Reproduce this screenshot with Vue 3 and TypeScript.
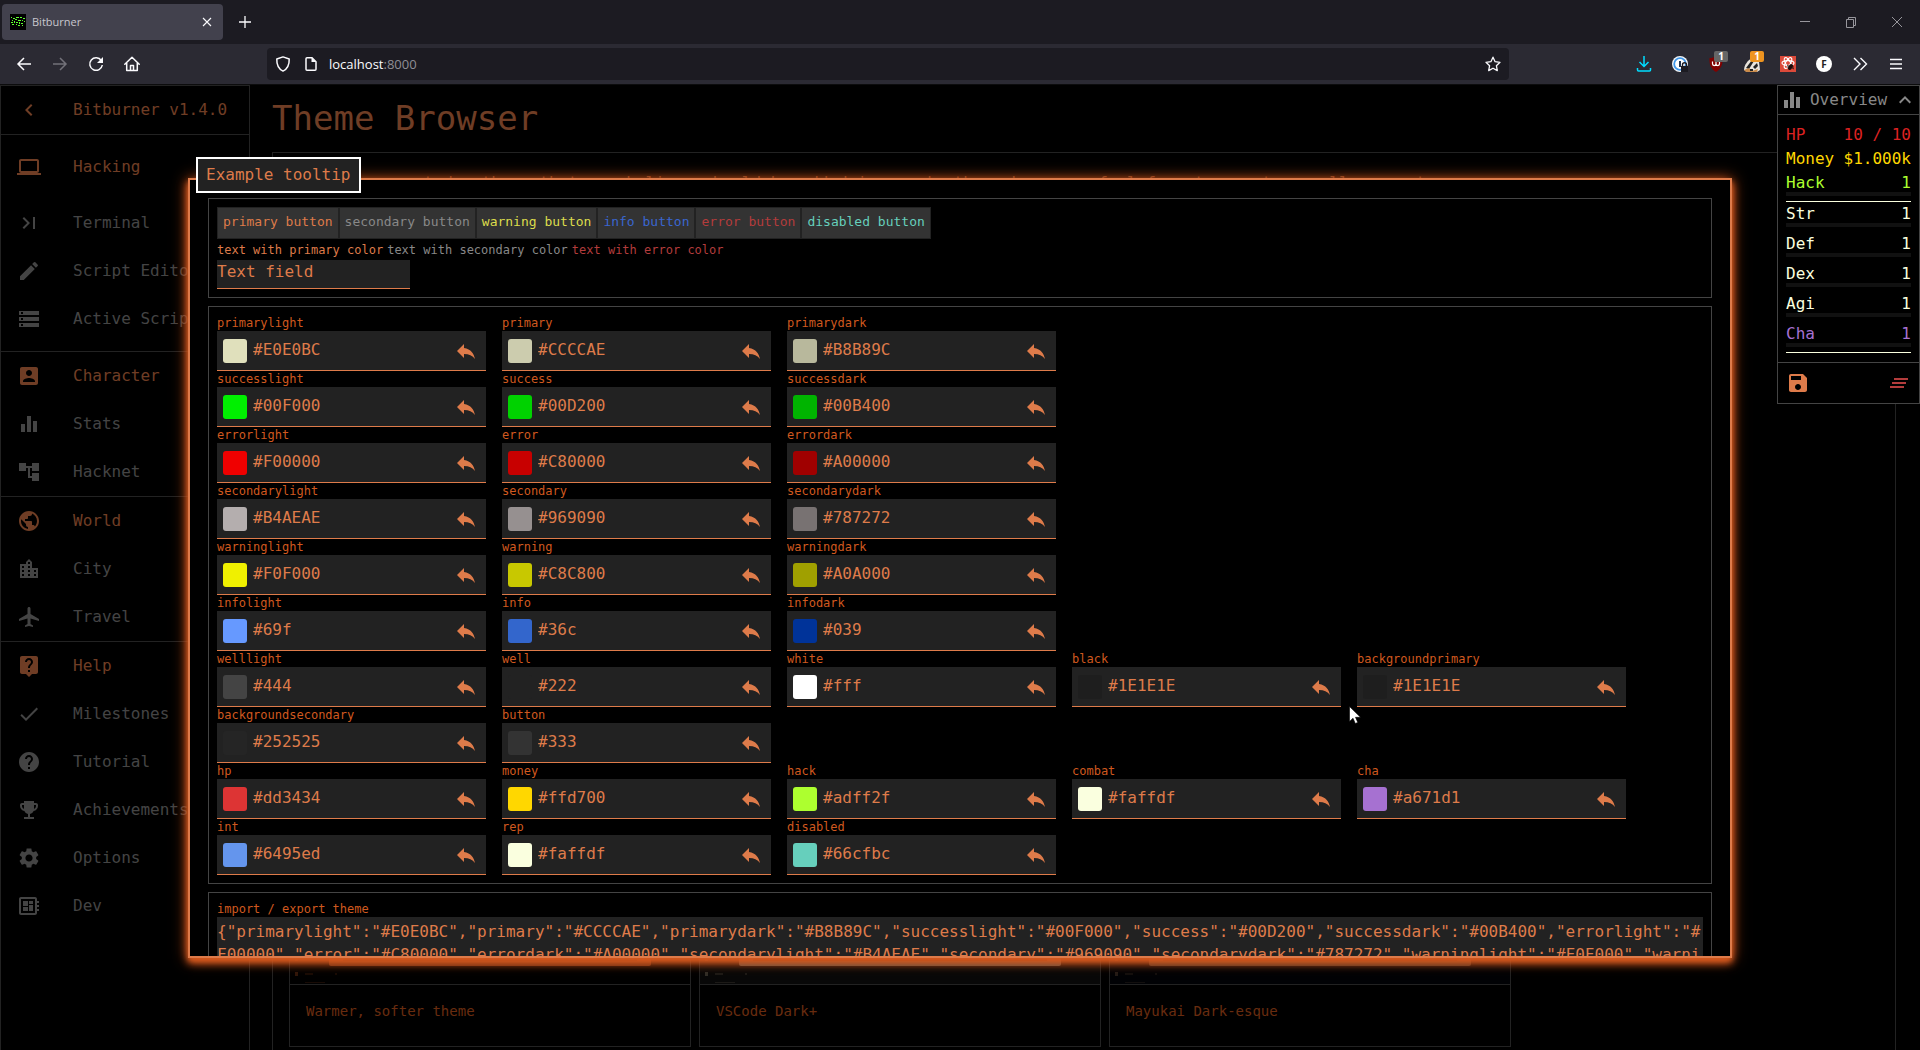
<script setup lang="ts">
import { computed, reactive, ref } from 'vue'

interface NavItem { label: string; icon: string; heading?: boolean }
interface Stat { label: string; value: string; kind: string; bar: boolean; rule: boolean }

const icons: Record<string, string> = {
  computer: 'M20 18c1.1 0 1.99-.9 1.99-2L22 6c0-1.1-.9-2-2-2H4c-1.1 0-2 .9-2 2v10c0 1.1.9 2 2 2H0v2h24v-2h-4zM4 6h16v10H4V6z',
  lastPage: 'M5.59 7.41 10.18 12l-4.59 4.59L7 18l6-6-6-6zM16 6h2v12h-2z',
  create: 'M3 17.25V21h3.75L17.81 9.94l-3.75-3.75L3 17.25zM20.71 7.04c.39-.39.39-1.02 0-1.41l-2.34-2.34a.9959.9959 0 0 0-1.41 0l-1.83 1.83 3.75 3.75 1.83-1.83z',
  storage: 'M2 20h20v-4H2v4zm2-3h2v2H4v-2zM2 4v4h20V4H2zm4 3H4V5h2v2zm-4 7h20v-4H2v4zm2-3h2v2H4v-2z',
  account: 'M3 5v14c0 1.1.89 2 2 2h14c1.1 0 2-.9 2-2V5c0-1.1-.9-2-2-2H5c-1.11 0-2 .9-2 2zm12 4c0 1.66-1.34 3-3 3s-3-1.34-3-3 1.34-3 3-3 3 1.34 3 3zm-9 8c0-2 4-3.1 6-3.1s6 1.1 6 3.1v1H6v-1z',
  equalizer: 'M10 20h4V4h-4v16zm-6 0h4v-8H4v8zM16 9v11h4V9h-4z',
  tree: 'M22 11V3h-7v3H9V3H2v8h7V8h2v10h4v3h7v-8h-7v3h-2V8h2v3z',
  globe: 'M12 2C6.48 2 2 6.48 2 12s4.48 10 10 10 10-4.48 10-10S17.52 2 12 2zm-1 17.93c-3.95-.49-7-3.85-7-7.93 0-.62.08-1.21.21-1.79L9 15v1c0 1.1.9 2 2 2v1.93zm6.9-2.54c-.26-.81-1-1.39-1.9-1.39h-1v-3c0-.55-.45-1-1-1H8v-2h2c.55 0 1-.45 1-1V7h2c1.1 0 2-.9 2-2v-.41c2.93 1.19 5 4.06 5 7.41 0 2.08-.8 3.97-2.1 5.39z',
  city: 'M15 11V5l-3-3-3 3v2H3v14h18V11h-6zm-8 8H5v-2h2v2zm0-4H5v-2h2v2zm0-4H5V9h2v2zm6 8h-2v-2h2v2zm0-4h-2v-2h2v2zm0-4h-2V9h2v2zm0-4h-2V5h2v2zm6 12h-2v-2h2v2zm0-4h-2v-2h2v2z',
  plane: 'M22 16v-2l-8.5-5V3.5c0-.83-.67-1.5-1.5-1.5s-1.5.67-1.5 1.5V9L2 14v2l8.5-2.5V19L8 20.5V22l4-1 4 1v-1.5L13.5 19v-5.5L22 16z',
  liveHelp: 'M19 2H5c-1.11 0-2 .9-2 2v14c0 1.1.89 2 2 2h4l3 3 3-3h4c1.1 0 2-.9 2-2V4c0-1.1-.9-2-2-2zm-6 16h-2v-2h2v2zm2.07-7.75-.9.92C13.45 11.9 13 12.5 13 14h-2v-.5c0-1.1.45-2.1 1.17-2.83l1.24-1.26c.37-.36.59-.86.59-1.41 0-1.1-.9-2-2-2s-2 .9-2 2H8c0-2.21 1.79-4 4-4s4 1.79 4 4c0 .88-.36 1.68-.93 2.25z',
  check: 'M9 16.17 4.83 12l-1.42 1.41L9 19 21 7l-1.41-1.41z',
  help: 'M12 2C6.48 2 2 6.48 2 12s4.48 10 10 10 10-4.48 10-10S17.52 2 12 2zm1 17h-2v-2h2v2zm2.07-7.75-.9.92C13.45 12.9 13 13.5 13 15h-2v-.5c0-1.1.45-2.1 1.17-2.83l1.24-1.26c.37-.36.59-.86.59-1.41 0-1.1-.9-2-2-2s-2 .9-2 2H8c0-2.21 1.79-4 4-4s4 1.79 4 4c0 .88-.36 1.68-.93 2.25z',
  trophy: 'M19 5h-2V3H7v2H5c-1.1 0-2 .9-2 2v1c0 2.55 1.92 4.63 4.39 4.94.63 1.5 1.98 2.63 3.61 2.96V19H7v2h10v-2h-4v-3.1c1.63-.33 2.98-1.46 3.61-2.96C19.08 12.63 21 10.55 21 8V7c0-1.1-.9-2-2-2zM5 8V7h2v3.82C5.84 10.4 5 9.3 5 8zm14 0c0 1.3-.84 2.4-2 2.82V7h2v1z',
  settings: 'M19.14 12.94c.04-.3.06-.61.06-.94 0-.32-.02-.64-.07-.94l2.03-1.58c.18-.14.23-.41.12-.61l-1.92-3.32c-.12-.22-.37-.29-.59-.22l-2.39.96c-.5-.38-1.03-.7-1.62-.94l-.36-2.54c-.04-.24-.24-.41-.48-.41h-3.84c-.24 0-.43.17-.47.41l-.36 2.54c-.59.24-1.13.57-1.62.94l-2.39-.96c-.22-.08-.47 0-.59.22L2.74 8.87c-.12.21-.08.47.12.61l2.03 1.58c-.05.3-.09.63-.09.94s.02.64.07.94l-2.03 1.58c-.18.14-.23.41-.12.61l1.92 3.32c.12.22.37.29.59.22l2.39-.96c.5.38 1.03.7 1.62.94l.36 2.54c.05.24.24.41.48.41h3.84c.24 0 .44-.17.47-.41l.36-2.54c.59-.24 1.13-.56 1.62-.94l2.39.96c.22.08.47 0 .59-.22l1.92-3.32c.12-.22.07-.47-.12-.61l-2.01-1.58zM12 15.6c-1.98 0-3.6-1.62-3.6-3.6s1.62-3.6 3.6-3.6 3.6 1.62 3.6 3.6-1.62 3.6-3.6 3.6z',
  board: 'M22 9V7h-2V5c0-1.1-.9-2-2-2H4c-1.1 0-2 .9-2 2v14c0 1.1.9 2 2 2h14c1.1 0 2-.9 2-2v-2h2v-2h-2v-2h2v-2h-2V9h2zm-4 10H4V5h14v14zM6 13h5v4H6zm6-6h4v3h-4zM6 7h5v5H6zm6 4h4v6h-4z',
  chevronLeft: 'M15.41 7.41 14 6l-6 6 6 6 1.41-1.41L10.83 12z',
  chevronUp: 'm12 8-6 6 1.41 1.41L12 10.83l4.59 4.58L18 14z',
  reply: 'M10 9V5l-7 7 7 7v-4.1c5 0 8.5 1.6 11 5.1-1-5-4-10-11-11z',
  save: 'M17 3H5c-1.11 0-2 .9-2 2v14c0 1.1.89 2 2 2h14c1.1 0 2-.9 2-2V7l-4-4zm-5 16c-1.66 0-3-1.34-3-3s1.34-3 3-3 3 1.34 3 3-1.34 3-3 3zm3-10H5V5h10v4z',
  clearAll: 'M5 13h14v-2H5v2zm-2 4h14v-2H3v2zM7 7v2h14V7H7z',
}

const navGroups: NavItem[][] = [
  [
    { label: 'Hacking', icon: 'computer', heading: true },
    { label: 'Terminal', icon: 'lastPage' },
    { label: 'Script Editor', icon: 'create' },
    { label: 'Active Scripts', icon: 'storage' },
  ],
  [
    { label: 'Character', icon: 'account', heading: true },
    { label: 'Stats', icon: 'equalizer' },
    { label: 'Hacknet', icon: 'tree' },
  ],
  [
    { label: 'World', icon: 'globe', heading: true },
    { label: 'City', icon: 'city' },
    { label: 'Travel', icon: 'plane' },
  ],
  [
    { label: 'Help', icon: 'liveHelp', heading: true },
    { label: 'Milestones', icon: 'check' },
    { label: 'Tutorial', icon: 'help' },
    { label: 'Achievements', icon: 'trophy' },
    { label: 'Options', icon: 'settings' },
    { label: 'Dev', icon: 'board' },
  ],
]

const rows: string[][] = [
  ['primarylight', 'primary', 'primarydark'],
  ['successlight', 'success', 'successdark'],
  ['errorlight', 'error', 'errordark'],
  ['secondarylight', 'secondary', 'secondarydark'],
  ['warninglight', 'warning', 'warningdark'],
  ['infolight', 'info', 'infodark'],
  ['welllight', 'well', 'white', 'black', 'backgroundprimary'],
  ['backgroundsecondary', 'button'],
  ['hp', 'money', 'hack', 'combat', 'cha'],
  ['int', 'rep', 'disabled'],
]

const defaults: Record<string, string> = {
  primarylight: '#E0E0BC', primary: '#CCCCAE', primarydark: '#B8B89C',
  successlight: '#00F000', success: '#00D200', successdark: '#00B400',
  errorlight: '#F00000', error: '#C80000', errordark: '#A00000',
  secondarylight: '#B4AEAE', secondary: '#969090', secondarydark: '#787272',
  warninglight: '#F0F000', warning: '#C8C800', warningdark: '#A0A000',
  infolight: '#69f', info: '#36c', infodark: '#039',
  welllight: '#444', well: '#222', white: '#fff', black: '#1E1E1E', backgroundprimary: '#1E1E1E',
  backgroundsecondary: '#252525', button: '#333',
  hp: '#dd3434', money: '#ffd700', hack: '#adff2f', combat: '#faffdf', cha: '#a671d1',
  int: '#6495ed', rep: '#faffdf', disabled: '#66cfbc',
}

const theme = reactive<Record<string, string>>({ ...defaults })
const exported = computed(() => JSON.stringify(theme))
const sample = ref('Text field')
const reset = (key: string) => { theme[key] = defaults[key] }

const buttonKinds = ['primary', 'secondary', 'warning', 'info', 'error', 'disabled']
const textKinds = ['primary', 'secondary', 'error']

const stats: Stat[] = [
  { label: 'HP', value: '10 / 10', kind: 'hp', bar: false, rule: false },
  { label: 'Money', value: '$1.000k', kind: 'money', bar: false, rule: false },
  { label: 'Hack', value: '1', kind: 'hack', bar: true, rule: true },
  { label: 'Str', value: '1', kind: 'combat', bar: true, rule: false },
  { label: 'Def', value: '1', kind: 'combat', bar: true, rule: false },
  { label: 'Dex', value: '1', kind: 'combat', bar: true, rule: false },
  { label: 'Agi', value: '1', kind: 'combat', bar: true, rule: false },
  { label: 'Cha', value: '1', kind: 'cha', bar: true, rule: true },
]

const cards = [
  { title: 'Warmer, softer theme', tint: '#c05a2a', base: '#000000' },
  { title: 'VSCode Dark+', tint: '#b0a48c', base: '#101010' },
  { title: 'Mayukai Dark-esque', tint: '#8a6a52', base: '#02040a' },
]
</script>

<template>
  <div class="window">
    <header class="tabs">
      <div class="tab">
        <svg class="favicon" width="16" height="16" viewBox="0 0 16 16" aria-hidden="true">
          <path d="M0 0h16v16H0z" fill="#000" />
          <path d="M1 3h1v1H1zM3 4h2v1H3zM6 3h3v1H6zM10 3h2v1h-2zM13 4h2v1h-2zM2 6h1v1H2zM5 5h2v1H5zM8 6h3v1H8zM12 6h1v1h-1zM14 7h1v1h-1zM1 8h2v1H1zM4 7h1v2H4zM6 8h2v1H6zM9 8h1v2H9zM11 9h2v1h-2zM2 10h2v1H2zM6 10h1v1H6zM8 11h2v1H8zM12 11h1v1h-1z" fill="#5dff2e" />
        </svg>
        <span class="tab-title">Bitburner</span>
        <button class="bare" aria-label="Close tab">
          <svg width="16" height="16" viewBox="0 0 16 16"><path d="m4 4 8 8m0-8-8 8" fill="none" stroke="#fbfbfe" stroke-width="1.1" /></svg>
        </button>
      </div>
      <button class="bare new-tab" aria-label="New tab">
        <svg width="16" height="16" viewBox="0 0 16 16"><path d="M8 2v12M2 8h12" fill="none" stroke="#fbfbfe" stroke-width="1.3" /></svg>
      </button>
      <div class="window-controls">
        <button class="bare" aria-label="Minimize"><svg width="12" height="12" viewBox="0 0 12 12"><path d="M1 5.500h10" stroke="#97969c" fill="none" /></svg></button>
        <button class="bare" aria-label="Restore"><svg width="12" height="12" viewBox="0 0 12 12"><path d="M1.500 3.500h7v8h-7zM3.500 3.500v-2h7v8h-2" stroke="#97969c" fill="none" /></svg></button>
        <button class="bare" aria-label="Close"><svg width="12" height="12" viewBox="0 0 12 12"><path d="m1 1 10 10M11 1 1 11" stroke="#97969c" fill="none" /></svg></button>
      </div>
    </header>

    <div class="toolbar">
      <nav class="nav-buttons" aria-label="Browser">
        <button class="bare" aria-label="Back"><svg width="16" height="16" viewBox="0 0 16 16"><path d="M15 8H2m6-6L2 8l6 6" fill="none" stroke="#fbfbfe" stroke-width="1.5" /></svg></button>
        <button class="bare" aria-label="Forward"><svg width="16" height="16" viewBox="0 0 16 16"><path d="M1 8h13M8 2l6 6-6 6" fill="none" stroke="#73727a" stroke-width="1.5" /></svg></button>
        <button class="bare" aria-label="Reload"><svg width="16" height="16" viewBox="0 0 16 16"><path d="M13.300 4.500A6.300 6.300 0 1 0 14.300 9" fill="none" stroke="#fbfbfe" stroke-width="1.500" /><path d="M15 1v6H9z" fill="#fbfbfe" /></svg></button>
        <button class="bare" aria-label="Home"><svg width="16" height="16" viewBox="0 0 16 16"><path d="M.8 8.200 8 1.200l7.200 7M2.700 7v7.500h10.600V7M6.500 14v-4.500h3V14" fill="none" stroke="#fbfbfe" stroke-width="1.500" stroke-linejoin="round" stroke-linecap="round" /></svg></button>
      </nav>
      <div class="address">
        <svg width="16" height="16" viewBox="0 0 16 16" aria-hidden="true"><path d="M8 .9 14.200 3c.2 5.500-1.400 9.800-6.200 12.100C3.200 12.800 1.600 8.500 1.800 3z" fill="none" stroke="#fbfbfe" stroke-width="1.500" stroke-linejoin="round" /></svg>
        <svg width="16" height="16" viewBox="0 0 16 16" aria-hidden="true"><path d="M4 1.700h5l4 4v7.600a1 1 0 0 1-1 1H4a1 1 0 0 1-1-1V2.700a1 1 0 0 1 1-1z" fill="none" stroke="#fbfbfe" stroke-width="1.500" /><path d="M8.500 1.500V6H13z" fill="#fbfbfe" /></svg>
        <span class="url">localhost<span class="port">:8000</span></span>
        <svg width="16" height="16" viewBox="0 0 16 16" aria-hidden="true"><path d="m8 1.200 2.100 4.500 4.900.6-3.600 3.400.9 4.900L8 12.200l-4.300 2.400.9-4.900L1 6.300l4.900-.6z" fill="none" stroke="#fbfbfe" stroke-width="1.300" stroke-linejoin="round" /></svg>
      </div>
      <div class="extensions">
        <button class="bare" aria-label="Downloads"><svg width="16" height="16" viewBox="0 0 16 16"><path d="M8 0v10M3.500 6 8 10.500 12.500 6M1.500 12v2a1 1 0 0 0 1 1h11a1 1 0 0 0 1-1v-2" fill="none" stroke="#00ddff" stroke-width="1.500" /></svg></button>
        <button class="bare" aria-label="Password manager"><svg width="16" height="16" viewBox="0 0 16 16"><circle cx="8" cy="8" r="8" fill="#f2f5f8" /><circle cx="8" cy="8" r="5.800" fill="#fff" stroke="#3f97ea" stroke-width="1.800" /><path d="M7 5h2v6H7z" fill="#1d3350" /><path d="M9 10h7v6H9z" fill="#1c1b22" /><path d="M10.500 10V8.700a2 2 0 0 1 4 0V10" fill="none" stroke="#1c1b22" stroke-width="1.400" /></svg></button>
        <button class="bare badged" aria-label="Content blocker"><svg width="16" height="16" viewBox="0 0 16 16"><path d="M8 0c2 1.500 4 2 6.500 2 .3 6-1 10.500-6.500 14C2.500 12.500 1.200 8 1.500 2 4 2 6 1.500 8 0z" fill="#800000" /><path d="M4.500 5.500v2.300a1.700 1.700 0 0 0 3.500 0V5.500m0 2.300a1.700 1.700 0 0 0 3.500 0V5.500" fill="none" stroke="#fff" stroke-width="1.200" /></svg><span class="badge grey">1</span></button>
        <button class="bare badged" aria-label="Tracker blocker"><svg width="16" height="16" viewBox="0 0 16 16"><path d="M0 14C0 9 4 4 8 2l7 4 1 8-3 2H3z" fill="#e9e4dc" /><path d="m2 12 6-8 2 1-5 8zM9 11l4-4 1 3-3 3z" fill="#222" /><path d="m0 14 5-2 3 3 6-2-1 3H2z" fill="#c98a4a" /><path d="M6 13h3v2H6z" fill="#222" /></svg><span class="badge orange">1</span></button>
        <button class="bare" aria-label="Component inspector"><svg width="16" height="16" viewBox="0 0 16 16"><path d="M0 0h16v16H0z" fill="#dc4a3a" /><g fill="none" stroke="#fff" stroke-width="1.200"><ellipse cx="8" cy="7" rx="6" ry="2.400" /><ellipse cx="8" cy="7" rx="6" ry="2.400" transform="rotate(60 8 7)" /><ellipse cx="8" cy="7" rx="6" ry="2.400" transform="rotate(120 8 7)" /></g><ellipse cx="10.500" cy="11" rx="2" ry="3.200" fill="#1c0a08" transform="rotate(30 10.500 11)" /><path d="m7 9 7 4M8 13l5-4M7 11h7" stroke="#1c0a08" stroke-width=".8" fill="none" /></svg></button>
        <button class="bare letter" aria-label="F extension">F</button>
        <button class="bare" aria-label="More tools"><svg width="16" height="16" viewBox="0 0 16 16"><path d="m2 2 6 6-6 6M8.500 2l6 6-6 6" fill="none" stroke="#fbfbfe" stroke-width="1.400" /></svg></button>
        <button class="bare" aria-label="Menu"><svg width="16" height="16" viewBox="0 0 16 16"><path d="M2 3.500h12M2 8h12M2 12.500h12" fill="none" stroke="#fbfbfe" stroke-width="1.400" /></svg></button>
      </div>
    </div>

    <div class="page">
      <aside class="sidebar">
        <div class="side-head">
          <svg class="icon" viewBox="0 0 24 24"><path :d="icons.chevronLeft" /></svg>
          <span>Bitburner v1.4.0</span>
        </div>
        <ul v-for="(group, g) in navGroups" :key="g" class="group">
          <li v-for="item in group" :key="item.label">
            <a href="#" class="nav-item" :class="{ heading: item.heading }">
              <svg class="icon" viewBox="0 0 24 24"><path :d="icons[item.icon]" /></svg>
              <span>{{ item.label }}</span>
            </a>
          </li>
        </ul>
      </aside>

      <main class="main">
        <h1>Theme Browser</h1>
        <section class="browser">
          <p>If you've created a theme that you believe should be added in game's theme browser, feel free to create a pull request.</p>
          <div class="cards">
            <article v-for="card in cards" :key="card.title" class="card">
              <svg class="preview" viewBox="0 0 400 80" preserveAspectRatio="none" aria-hidden="true">
                <path d="M0 0h400v80H0z" :fill="card.base" />
                <rect x="39" y="-20" width="322" height="82" rx="2" :fill="card.tint" />
                <path d="M53 0h294v57H53z" :fill="card.base" opacity=".6" />
                <path d="M5 68h3v4H5zM5 53h3v4H5z" :fill="card.tint" opacity=".5" />
                <path d="M15 69h8v2h-8zM45 69h2v2h-2zM15 78h20v1H15z" :fill="card.tint" opacity=".25" />
              </svg>
              <div class="card-body">{{ card.title }}</div>
            </article>
          </div>
        </section>
      </main>

      <div class="backdrop">
        <div class="tooltip" role="tooltip">Example tooltip</div>
        <div class="modal" role="dialog" aria-label="Theme editor">
          <section class="panel">
            <div class="buttons">
              <button v-for="kind in buttonKinds" :key="kind" class="sample-button" :class="kind" :disabled="kind === 'disabled'">{{ kind }} button</button>
            </div>
            <div class="texts">
              <span v-for="kind in textKinds" :key="kind" :class="kind">text with {{ kind }} color</span>
            </div>
            <input v-model="sample" class="text-field" type="text" aria-label="Text field" />
          </section>

          <section class="panel">
            <div v-for="row in rows" :key="row[0]" class="row">
              <div v-for="key in row" :key="key" class="cell">
                <label :for="`color-${key}`">{{ key }}</label>
                <div class="field">
                  <button class="bare swatch" :style="{ background: theme[key] }" :aria-label="`Pick ${key}`"></button>
                  <input :id="`color-${key}`" v-model="theme[key]" type="text" />
                  <button class="bare undo" :aria-label="`Reset ${key}`" @click="reset(key)">
                    <svg class="icon" viewBox="0 0 24 24"><path :d="icons.reply" /></svg>
                  </button>
                </div>
              </div>
            </div>
          </section>

          <section class="panel">
            <label for="theme-json">import / export theme</label>
            <textarea id="theme-json" rows="7" spellcheck="false" :value="exported"></textarea>
          </section>
        </div>
      </div>

      <section class="overview" aria-label="Overview">
        <div class="overview-head">
          <svg class="icon" viewBox="0 0 24 24"><path :d="icons.equalizer" /></svg>
          <span>Overview</span>
          <svg class="icon" viewBox="0 0 24 24"><path :d="icons.chevronUp" /></svg>
        </div>
        <table>
          <tbody>
            <template v-for="stat in stats" :key="stat.label">
              <tr :class="[stat.kind, { plain: !stat.bar }]">
                <th scope="row">{{ stat.label }}</th>
                <td>{{ stat.value }}</td>
              </tr>
              <tr v-if="stat.bar">
                <td class="bar-cell" :class="{ rule: stat.rule }" colspan="2"><div class="bar"></div></td>
              </tr>
            </template>
          </tbody>
        </table>
        <div class="overview-foot">
          <button class="bare save" aria-label="Save game"><svg class="icon" viewBox="0 0 24 24"><path :d="icons.save" /></svg></button>
          <button class="bare kill" aria-label="Kill all scripts"><svg class="icon" viewBox="0 0 24 24"><path :d="icons.clearAll" /></svg></button>
        </div>
      </section>

      <svg class="pointer" width="13" height="19" viewBox="0 0 13 19" aria-hidden="true"><path d="M.5.500v15l3.500-3.300 2.300 5.300 2.500-1.100-2.300-5.100h5z" fill="#fff" stroke="#000" stroke-width=".6" /></svg>
    </div>
  </div>
</template>

<style>
body {
  margin: 0;
  background: #000;
}
</style>

<style scoped>
* {
  box-sizing: border-box;
}

.window {
  --primary: #de7b4a;
  --label: #d0591f;
  display: flex;
  flex-direction: column;
  height: 100vh;
  overflow: hidden;
  background: #000;
  font-family: "DejaVu Sans Mono", "Liberation Mono", monospace;
  font-size: 16px;
  line-height: 24px;
}

.bare {
  display: grid;
  place-items: center;
  margin: 0;
  padding: 0;
  border: 0;
  background: none;
  color: inherit;
}

svg {
  display: block;
  flex: none;
}

.icon {
  width: 24px;
  height: 24px;
  fill: currentColor;
}

/* browser chrome */
.tabs {
  display: flex;
  align-items: center;
  flex: none;
  height: 44px;
  padding-left: 2px;
  background: #1c1b22;
  font-family: "Open Sans", "Noto Sans", sans-serif;
}

.tab {
  display: flex;
  align-items: center;
  gap: 6px;
  width: 221px;
  height: 36px;
  padding: 0 8px;
  border-radius: 4px;
  background: #42414d;
}

.tab-title {
  flex: 1;
  color: #c8c7cd;
  font-size: 11px;
}

.new-tab {
  margin-left: 14px;
}

.window-controls {
  display: flex;
  gap: 34px;
  margin-left: auto;
  padding-right: 17px;
}

.toolbar {
  display: flex;
  align-items: center;
  flex: none;
  height: 41px;
  padding: 0 16px;
  border-bottom: 1px solid #0c0c0d;
  background: #2b2a33;
  font-family: "Open Sans", "Noto Sans", sans-serif;
}

.nav-buttons {
  display: flex;
  gap: 20px;
  width: 251px;
}

.address {
  display: flex;
  align-items: center;
  flex: 1;
  gap: 12px;
  height: 32px;
  margin-right: 117px;
  padding: 0 8px;
  border-radius: 4px;
  background: #1c1b22;
}

.url {
  flex: 1;
  margin-left: -2px;
  color: #fbfbfe;
  font-size: 13px;
}

.port {
  color: #8f8e95;
}

.extensions {
  display: grid;
  grid-template-columns: repeat(8, 36px);
  justify-items: center;
  margin-right: -10px;
}

.badged {
  position: relative;
}

.badge {
  position: absolute;
  top: -5px;
  left: 6px;
  width: 14px;
  height: 11px;
  border-radius: 2px;
  color: #fff;
  font: bold 10px/11px "Open Sans", sans-serif;
}

.badge.grey {
  background: #666;
}

.badge.orange {
  background: #ee9420;
}

.letter {
  width: 16px;
  height: 16px;
  border-radius: 50%;
  background: #fff;
  color: #222;
  font: bold 10px/16px "Open Sans", sans-serif;
}

/* game page */
.page {
  position: relative;
  display: flex;
  flex: 1;
  min-height: 0;
}

.sidebar {
  flex: none;
  width: 250px;
  border: 1px solid #444;
  border-bottom: 0;
  color: #888;
}

.side-head {
  display: flex;
  align-items: center;
  gap: 32px;
  height: 49px;
  padding-left: 16px;
  border-bottom: 1px solid #444;
  color: var(--primary);
  white-space: nowrap;
}

.group {
  margin: 0;
  padding: 0;
  list-style: none;
}

.group + .group {
  border-top: 1px solid #444;
}

.side-head + .group {
  padding: 8px 0;
}

.side-head + .group li:first-child {
  margin-bottom: 8px;
}

.nav-item {
  display: flex;
  align-items: center;
  gap: 32px;
  height: 48px;
  padding-left: 16px;
  color: #888;
  text-decoration: none;
  white-space: nowrap;
}

.nav-item.heading {
  color: var(--primary);
}

.main {
  display: flex;
  flex: 1;
  flex-direction: column;
  min-width: 0;
  padding: 0 24px 0 22px;
  color: var(--primary);
}

h1 {
  margin: 0;
  padding: 12px 0 13px;
  font-size: 34px;
  font-weight: 400;
  line-height: 42px;
}

.browser {
  display: flex;
  flex: 1;
  flex-direction: column;
  padding: 18px 16px 3px;
  border: 1px solid #444;
  border-bottom: 0;
}

.browser p {
  margin: 0;
}

.cards {
  display: flex;
  gap: 8px;
  margin-top: auto;
}

.card {
  width: 402px;
  border: 1px solid #444;
}

.preview {
  width: 100%;
  height: 80px;
}

.card-body {
  padding: 15px 16px 24px;
  border-top: 1px solid #444;
  color: var(--label);
  font-size: 14px;
  line-height: 22px;
}

/* dialog */
.backdrop {
  position: absolute;
  inset: 0;
  padding: 93px 188px 92px;
  background: rgba(0, 0, 0, 0.5);
}

.modal {
  height: 100%;
  padding: 18px;
  overflow: hidden;
  border: 2px solid var(--primary);
  background: #000;
  box-shadow: 0 3px 5px -1px #d4581e, 0 5px 8px 0 #d4581e, 0 1px 14px 0 #d4581e;
}

.tooltip {
  position: absolute;
  top: 72px;
  left: 196px;
  padding: 4px 8px;
  border: 2px solid #fff;
  background: #222;
  color: var(--primary);
}

.panel {
  padding: 8px;
  border: 1px solid #444;
  font-size: 12px;
  line-height: 16px;
}

.panel + .panel {
  margin-top: 8px;
}

.panel label {
  display: block;
  color: var(--label);
}

.buttons {
  display: flex;
}

.sample-button {
  height: 32px;
  padding: 0 5px 3px;
  border: 1px solid #222;
  background: #333;
  font: 13px/20px "DejaVu Sans Mono", "Liberation Mono", monospace;
}

.texts {
  display: flex;
  gap: 4px;
  padding: 3px 0 2px;
}

.primary {
  color: var(--primary);
}

.secondary {
  color: #888;
}

.warning {
  color: #dcdc4c;
}

.info {
  color: #3a66d0;
}

.error {
  color: #b33c3c;
}

.disabled {
  color: #66cfbc;
}

.text-field,
.field input,
textarea {
  border: 0;
  border-radius: 0;
  outline: 0;
  color: var(--primary);
  font: 16px/23px "DejaVu Sans Mono", "Liberation Mono", monospace;
}

.text-field {
  display: block;
  width: 193px;
  height: 29px;
  padding: 0 0 5px;
  border-bottom: 1px solid var(--primary);
  background: #222;
}

.row {
  display: flex;
  gap: 16px;
}

.cell {
  width: 269px;
}

.field {
  display: flex;
  align-items: center;
  gap: 6px;
  height: 40px;
  padding: 0 8px 0 6px;
  border-bottom: 1px solid var(--primary);
  background: #222;
}

.swatch {
  width: 24px;
  height: 24px;
  border-radius: 3px;
}

.field input {
  flex: 1;
  min-width: 0;
  height: 26px;
  padding: 0 0 3px;
  background: transparent;
}

.undo {
  color: var(--primary);
}

textarea {
  display: block;
  width: 100%;
  padding: 3px 0;
  overflow: hidden;
  resize: none;
  background: #222;
  word-break: break-all;
  line-break: anywhere;
}

/* stats overlay */
.overview {
  position: absolute;
  top: 0;
  right: 0;
  width: 143px;
  border: 1px solid #444;
  background: #000;
}

.overview-head {
  display: flex;
  align-items: center;
  justify-content: space-between;
  height: 29px;
  padding: 0 2px;
  border-bottom: 1px solid #444;
  color: #888;
}

.overview table {
  width: calc(100% - 16px);
  margin: 8px 8px 9px;
  border-collapse: separate;
  border-spacing: 0;
  line-height: 18px;
}

.overview th,
.overview td {
  padding: 3px 0 0;
  font-weight: 400;
  text-align: left;
  white-space: nowrap;
}

.overview td {
  text-align: right;
}

.overview .plain th,
.overview .plain td {
  padding-bottom: 3px;
}

.overview .bar-cell {
  padding: 0 0 5px;
}

.overview .bar-cell.rule {
  border-bottom: 1px solid #faffdf;
}

.bar {
  height: 4px;
  background: #111;
}

.hp {
  color: #dd2222;
}

.money {
  color: #ffd700;
}

.hack {
  color: #adff2f;
}

.combat {
  color: #faffdf;
}

.cha {
  color: #a671d1;
}

.overview-foot {
  display: flex;
  justify-content: space-between;
  padding: 8px;
  border-top: 1px solid #444;
}

.save {
  color: var(--primary);
}

.kill {
  color: #b33c3c;
}

.pointer {
  position: absolute;
  top: 621px;
  left: 1349px;
}
</style>
